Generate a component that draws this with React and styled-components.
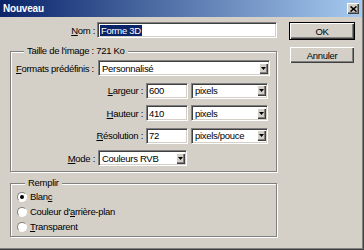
import styled, { createGlobalStyle } from 'styled-components';

const GlobalStyle = createGlobalStyle`
    html, body {
        margin: 0;
        padding: 0;
        background: #D4D0C8;
    }

    body {
        font-family: "Liberation Sans", Arial, sans-serif;
        font-size: 9.5px;
        letter-spacing: -0.3px;
        color: #000000;
    }
`

const raised = `
    box-shadow: inset 1px 1px 0 #FFFFFF, inset -1px -1px 0 #404040, inset -2px -2px 0 #808080;
`

const sunken = `
    border-top: 1px solid #808080;
    border-left: 1px solid #808080;
    border-bottom: 1px solid #FFFFFF;
    border-right: 1px solid #FFFFFF;
    box-shadow: inset 1px 1px 0 #404040, inset -1px -1px 0 #D4D0C8;
`

function DropArrow() {
    return (
        <ArrowButton>
            <svg width="5" height="3" viewBox="0 0 5 3">
                <path d="M0 0 H5 L2.5 3 Z" fill="#000000" />
            </svg>
        </ArrowButton>
    );
}

function Select({ width, value }) {
    return (
        <SelectBox $width={width}>
            <span>{value}</span>
            <DropArrow />
        </SelectBox>
    );
}

function UnitRow({ label, value, unit }) {
    return (
        <Row>
            <Label $width={127} $align="right">{label}</Label>
            <TextBox $width={42}>{value}</TextBox>
            <Select width={77} value={unit} />
        </Row>
    );
}

export default function App() {

    const options = [
        { label: <>Blan<Key>c</Key></>, checked: true },
        { label: <>Couleur d'<Key>a</Key>rrière-plan</>, checked: false },
        { label: <><Key>T</Key>ransparent</>, checked: false },
    ];

    return (
        <>
            <GlobalStyle />
            <Window>
                <TitleBar>
                    <Title>Nouveau</Title>
                    <CloseButton>
                        <svg width="7" height="6" viewBox="0 0 7 6">
                            <path d="M0.5 0.5 L6.5 5.5 M6.5 0.5 L0.5 5.5" stroke="#000000" strokeWidth="1.6" />
                        </svg>
                    </CloseButton>
                </TitleBar>
                <Body>
                    <Main>
                        <NameRow>
                            <Label $width={85} $align="right"><Key>N</Key>om :</Label>
                            <TextBox $width={180}>
                                <Selected>Forme 3D</Selected>
                            </TextBox>
                        </NameRow>

                        <Group $pad="3px 0 5px 5px">
                            <Legend>Taille de l'image : 721 Ko</Legend>
                            <Rows>
                                <Row>
                                    <Label $width={79}><Key>F</Key>ormats prédéfinis :</Label>
                                    <Select width={172} value="Personnalisé" />
                                </Row>
                                <UnitRow label={<><Key>L</Key>argeur :</>} value="600" unit="pixels" />
                                <UnitRow label={<><Key>H</Key>auteur :</>} value="410" unit="pixels" />
                                <UnitRow label={<><Key>R</Key>ésolution :</>} value="72" unit="pixels/pouce" />
                                <Row>
                                    <Label $width={79} $align="right"><Key>M</Key>ode :</Label>
                                    <Select width={89} value="Couleurs RVB" />
                                </Row>
                            </Rows>
                        </Group>

                        <Group $pad="0 0 2px 6px">
                            <Legend>Remplir</Legend>
                            {options.map((opt, index) =>
                                <Option key={index}>
                                    <Radio $checked={opt.checked} />
                                    <span>{opt.label}</span>
                                </Option>
                            )}
                        </Group>
                    </Main>
                    <Side>
                        <Button $default>OK</Button>
                        <Button>Annuler</Button>
                    </Side>
                </Body>
            </Window>
        </>
    );
}

const Window = styled.div`
    width: 364px;
    height: 250px;
    box-sizing: border-box;
    border-right: 1px solid #404040;
    border-bottom: 1px solid #404040;
    box-shadow: inset -1px -1px 0 #808080;
    display: flex;
    flex-direction: column;
    overflow: hidden;
`

const TitleBar = styled.div`
    height: 17px;
    box-sizing: border-box;
    padding: 0 3px 0 3px;
    margin-right: 1px;
    background: linear-gradient(to right, #0A246A, #A6CAF0);
    display: flex;
    justify-content: space-between;
    align-items: center;
`

const Title = styled.span`
    color: #FFFFFF;
    font-weight: bold;
    font-size: 10px;
    letter-spacing: -0.2px;
`

const CloseButton = styled.div`
    width: 12px;
    height: 11px;
    background: #D4D0C8;
    display: flex;
    justify-content: center;
    align-items: center;
    ${raised}
`

const Body = styled.div`
    display: flex;
    padding: 5px 0 0 10px;
`

const Main = styled.div`
    width: 267px;
    display: flex;
    flex-direction: column;
`

const NameRow = styled.div`
    display: flex;
    align-items: center;
    gap: 2px;
    margin-bottom: 7px;
`

const Label = styled.span`
    width: ${props => props.$width}px;
    flex-shrink: 0;
    text-align: ${props => props.$align || 'left'};
    white-space: nowrap;
`

const Key = styled.span`
    text-decoration: underline;
`

const TextBox = styled.div`
    width: ${props => props.$width}px;
    height: 16px;
    box-sizing: border-box;
    background: #FFFFFF;
    padding: 0 2px;
    display: flex;
    align-items: center;
    ${sunken}
`

const Selected = styled.span`
    background: #0A246A;
    color: #FFFFFF;
    padding: 0 1px;
    line-height: 11px;
`

const Group = styled.fieldset`
    margin: 0 0 5px 0;
    padding: ${props => props.$pad};
    border: 1px solid #808080;
    box-shadow: inset 1px 1px 0 #FFFFFF, 1px 1px 0 #FFFFFF;
    display: flex;
    flex-direction: column;
`

const Legend = styled.legend`
    margin-left: 8px;
    padding: 0 3px;
    line-height: 12px;
    background: #D4D0C8;
`

const Rows = styled.div`
    display: flex;
    flex-direction: column;
    gap: 6.5px;
`

const Row = styled.div`
    display: flex;
    align-items: center;
    gap: 3px;
    height: 16px;
`

const SelectBox = styled.div`
    width: ${props => props.$width}px;
    height: 16px;
    box-sizing: border-box;
    background: #FFFFFF;
    padding: 0 1px 0 3px;
    display: flex;
    justify-content: space-between;
    align-items: center;
    white-space: nowrap;
    ${sunken}
`

const ArrowButton = styled.div`
    width: 9px;
    height: 11px;
    flex-shrink: 0;
    background: #D4D0C8;
    display: flex;
    justify-content: center;
    align-items: center;
    ${raised}
`

const Option = styled.div`
    height: 15px;
    display: flex;
    align-items: center;
    gap: 3px;
`

const Radio = styled.div`
    width: 10px;
    height: 10px;
    box-sizing: border-box;
    border-radius: 50%;
    background: #FFFFFF;
    border: 1px solid;
    border-color: #808080 #FFFFFF #FFFFFF #808080;
    display: flex;
    justify-content: center;
    align-items: center;

    &::after {
        content: "";
        width: 4px;
        height: 4px;
        border-radius: 50%;
        background: #000000;
        display: ${props => props.$checked ? 'block' : 'none'};
    }
`

const Side = styled.div`
    margin-left: 12px;
    width: 66px;
    display: flex;
    flex-direction: column;
    gap: 6px;
`

const Button = styled.div`
    height: 18px;
    box-sizing: border-box;
    display: flex;
    justify-content: center;
    align-items: center;
    background: #D4D0C8;
    border: 1px solid ${props => props.$default ? '#000000' : 'transparent'};
    ${raised}
`
